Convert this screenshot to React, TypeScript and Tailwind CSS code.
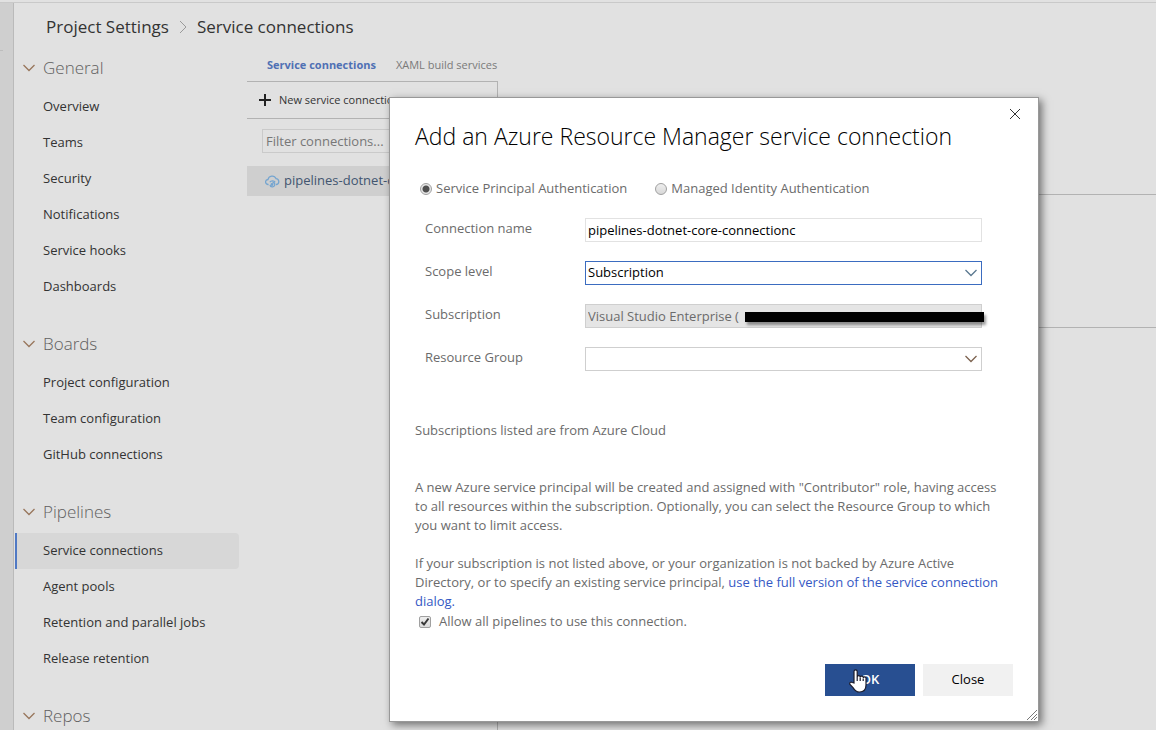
import React from "react";

const groups = [
  { name: "General", items: ["Overview", "Teams", "Security", "Notifications", "Service hooks", "Dashboards"] },
  { name: "Boards", items: ["Project configuration", "Team configuration", "GitHub connections"] },
  { name: "Pipelines", items: ["Service connections", "Agent pools", "Retention and parallel jobs", "Release retention"] },
  { name: "Repos", items: [] },
];

function Chevron({ className = "" }: { className?: string }) {
  return (
    <svg className={className} width="12" height="8" viewBox="0 0 12 8" fill="none" stroke="currentColor" strokeWidth="1.3" aria-hidden="true">
      <path d="M0.5 1 L6 6.5 L11.5 1" />
    </svg>
  );
}

function Sidebar() {
  return (
    <nav aria-label="Project settings" className="w-[225px] shrink-0">
      {groups.map((group) => (
        <section key={group.name} className="mb-[21px]">
          <h2 className="mb-[3px] flex h-9 items-center text-[17px] font-light text-[#606060]">
            <button type="button" className="flex items-center gap-2 pl-[9px]">
              <Chevron className="text-[#98765c]" />
              {group.name}
            </button>
          </h2>
          <ul className="ml-px">
            {group.items.map((item) => (
              <li key={item}>
                <a
                  href="#"
                  className={
                    item === "Service connections"
                      ? "flex h-9 items-center rounded-r-sm border-l-2 border-[#5079c4] bg-[#d7d7d7] pl-[26px]"
                      : "flex h-9 items-center pl-7"
                  }
                >
                  {item}
                </a>
              </li>
            ))}
          </ul>
        </section>
      ))}
    </nav>
  );
}

function CloudIcon() {
  return (
    <svg width="15" height="13" viewBox="0 0 15 13" fill="none" stroke="#75a5d0" strokeWidth="1.3" aria-hidden="true">
      <path d="M3.6 9.500H3.200A2.500 2.500 0 0 1 3 4.500 4.200 4.200 0 0 1 11 3.600 3 3 0 0 1 11.500 9.500H11" />
      <path d="M4.800 7.200a2.900 2.200 0 0 1 5.400 0M5 9.800a2.400 2.300 0 0 0 4.800-.6 2 2 0 0 0-2.300-1.700" />
      <circle cx="7" cy="9.500" r="0.800" fill="#75a5d0" />
    </svg>
  );
}

function Connections() {
  return (
    <main className="ml-2 flex min-w-0 grow flex-col">
      <div className="flex h-[31px] items-center gap-5 pl-5 text-[11px]">
        <a href="#" className="font-bold text-[#4f70b4]">Service connections</a>
        <a href="#" className="text-[#7a7a7a]">XAML build services</a>
      </div>
      <div className="flex grow">
        <div className="w-[251px] shrink-0 border-t border-r border-[#b2b2b2]">
          <div className="flex h-[37px] items-center border-b border-[#b2b2b2] pl-3">
            <button type="button" className="flex items-center gap-2 text-[11px] whitespace-nowrap">
              <svg width="12" height="12" viewBox="0 0 12 12" stroke="#222" strokeWidth="2" aria-hidden="true">
                <path d="M6 0V12M0 6H12" />
              </svg>
              New service connection
            </button>
          </div>
          <div className="px-[15px] pt-[10px]">
            <input
              aria-label="Filter connections"
              placeholder="Filter connections..."
              className="h-6 w-full border border-[#cacaca] px-[3px] text-[13px] placeholder:text-[#777]"
            />
          </div>
          <a href="#" className="mt-[13px] flex h-[30px] items-center gap-1 overflow-hidden bg-[#cfcfcf] pl-[18px] text-[13px] whitespace-nowrap text-[#42556f]">
            <CloudIcon />
            pipelines-dotnet-core
          </a>
        </div>
        <div className="grow pt-[113px]">
          <div className="h-[134px] border-y border-[#b2b2b2]" />
        </div>
      </div>
    </main>
  );
}

const fieldBox = "h-6 w-full appearance-none border bg-white px-[2px] text-[13px] text-black outline-none";

function Field({ id, label, children }: { id: string; label: string; children: React.ReactNode }) {
  return (
    <div className="flex h-6">
      <label htmlFor={id} className="w-40 shrink-0 leading-5">{label}</label>
      <div className="relative grow">{children}</div>
    </div>
  );
}

function Radio({ id, label, checked }: { id: string; label: string; checked?: boolean }) {
  return (
    <div className="flex items-center gap-1">
      <input
        id={id}
        type="radio"
        name="auth"
        defaultChecked={checked}
        className="size-3 appearance-none rounded-full border border-[#a0a0a0] bg-linear-to-b from-[#eee] to-[#d8d8d8] checked:bg-[radial-gradient(circle,#505050_0_3px,#e8e8e8_4px)]"
      />
      <label htmlFor={id}>{label}</label>
    </div>
  );
}

function Dialog() {
  return (
    <div
      role="dialog"
      aria-labelledby="dialog-title"
      className="absolute top-[97px] left-[389px] flex w-[650px] flex-col border border-[#989898] bg-white px-[25px] pb-[25px] text-[13px] text-[#6b6b6b] shadow-[3px_3px_8px_rgba(0,0,0,0.5)]"
    >
      <div className="-mr-2 flex h-[22px] items-end justify-end">
        <button type="button" aria-label="Close dialog">
          <svg width="12" height="12" viewBox="0 0 12 12" stroke="#333" fill="none" aria-hidden="true">
            <path d="M1 1 L11 11 M11 1 L1 11" />
          </svg>
        </button>
      </div>
      <h1 id="dialog-title" className="h-8 text-[23px] leading-8 font-light whitespace-nowrap text-black">
        Add an Azure Resource Manager service connection
      </h1>
      <div className="mt-[27px] flex h-5 items-center gap-7 pl-[5px]">
        <Radio id="auth-principal" label="Service Principal Authentication" checked />
        <Radio id="auth-identity" label="Managed Identity Authentication" />
      </div>
      <div className="mt-[19px] flex flex-col gap-[19px] pr-[31px] pl-[10px]">
        <Field id="name" label="Connection name">
          <input id="name" defaultValue="pipelines-dotnet-core-connectionc" className={fieldBox + " border-[#e2e2e2]"} />
        </Field>
        <Field id="scope" label="Scope level">
          <select id="scope" className={fieldBox + " border-[#3b6cc0]"}>
            <option>Subscription</option>
          </select>
          <Chevron className="pointer-events-none absolute top-2 right-[5px] text-[#5b7890]" />
        </Field>
        <Field id="subscription" label="Subscription">
          <input id="subscription" disabled defaultValue="Visual Studio Enterprise (" className="h-6 w-full border border-[#cfcfcf] bg-[#e5e5e5] px-[2px] text-[13px] text-[#6b6b6b]" />
          <span className="absolute top-2 -right-[2px] left-[160px] h-[10px] bg-black shadow-[2px_3px_3px_rgba(0,0,0,0.4)]" />
        </Field>
        <Field id="group" label="Resource Group">
          <select id="group" className={fieldBox + " border-[#cfcfcf]"}>
            <option></option>
          </select>
          <Chevron className="pointer-events-none absolute top-2 right-[5px] text-[#7d6350]" />
        </Field>
      </div>
      <p className="mt-[50px] leading-[19px]">Subscriptions listed are from Azure Cloud</p>
      <p className="mt-[38px] leading-[19px]">
        A new Azure service principal will be created and assigned with "Contributor" role, having access<br />
        to all resources within the subscription. Optionally, you can select the Resource Group to which<br />
        you want to limit access.
      </p>
      <p className="mt-[19px] leading-[19px]">
        If your subscription is not listed above, or your organization is not backed by Azure Active<br />
        Directory, or to specify an existing service principal,{" "}
        <a href="#" className="text-[#3558c4]">use the full version of the service connection<br />dialog.</a>
      </p>
      <div className="flex h-[22px] items-center gap-2 pl-1">
        <span className="relative flex">
          <input id="allow" type="checkbox" defaultChecked className="size-3 appearance-none rounded-xs border border-[#a0a0a0] bg-linear-to-b from-[#eee] to-[#dcdcdc]" />
          <svg className="pointer-events-none absolute inset-0" width="12" height="12" viewBox="0 0 12 12" fill="none" stroke="#3a3a3a" strokeWidth="2" aria-hidden="true">
            <path d="M2.5 6 L5 8.5 L9.5 2.5" />
          </svg>
        </span>
        <label htmlFor="allow">Allow all pipelines to use this connection.</label>
      </div>
      <div className="mt-[31px] flex justify-end gap-2">
        <button type="button" className="relative h-8 w-[90px] bg-[#284f91] font-semibold text-white">
          OK
          <svg className="absolute top-[5px] left-6" width="19" height="24" viewBox="0 0 19 24" fill="white" stroke="#1b1b2b" strokeWidth="1.2" aria-hidden="true">
            <path d="M5 14V2.500a1.600 1.600 0 0 1 3.200 0V8a1.500 1.500 0 0 1 3 .2 1.500 1.500 0 0 1 3 .8 1.400 1.400 0 0 1 2.800.8V16c0 4.500-2 7-6.500 7-4 0-5-2-6.500-4.500L1 15.500c-1-2 1-3 2.300-2z" />
            <path d="M8.200 8v4M11.200 8.500v3.500M14.200 9.500V12" />
          </svg>
        </button>
        <button type="button" className="h-8 w-[90px] bg-[#f1f1f1] font-medium text-black">Close</button>
      </div>
      <svg className="absolute right-px bottom-px" width="10" height="10" viewBox="0 0 10 10" stroke="#777" aria-hidden="true">
        <path d="M0 10 L10 0 M4 10 L10 4 M7 10 L10 7" />
      </svg>
    </div>
  );
}

export default function App() {
  return (
    <div className="relative flex h-screen flex-col overflow-hidden bg-[#e1e1e1] pt-[2px] font-['Open_Sans','Noto_Sans',sans-serif] text-[13px] text-[#333]">
      <div className="flex min-h-0 grow border-t border-[#c9c9c9]">
        <aside className="w-[14px] shrink-0 border-r border-[#bababa] bg-[#cfcfcf]">
          <div className="mt-[47px] w-[3px] border-t border-[#bdbdbd]" />
        </aside>
        <div className="flex min-w-0 grow flex-col">
          <header className="flex h-[47px] shrink-0 items-center gap-[10px] pt-px pl-8 text-[17px]">
            <a href="#">Project Settings</a>
            <svg width="8" height="14" viewBox="0 0 8 14" fill="none" stroke="#9a9a9a" aria-hidden="true">
              <path d="M1 1 L7 7 L1 13" />
            </svg>
            <a href="#">Service connections</a>
          </header>
          <div className="flex min-h-0 grow">
            <Sidebar />
            <Connections />
          </div>
        </div>
      </div>
      <Dialog />
    </div>
  );
}
